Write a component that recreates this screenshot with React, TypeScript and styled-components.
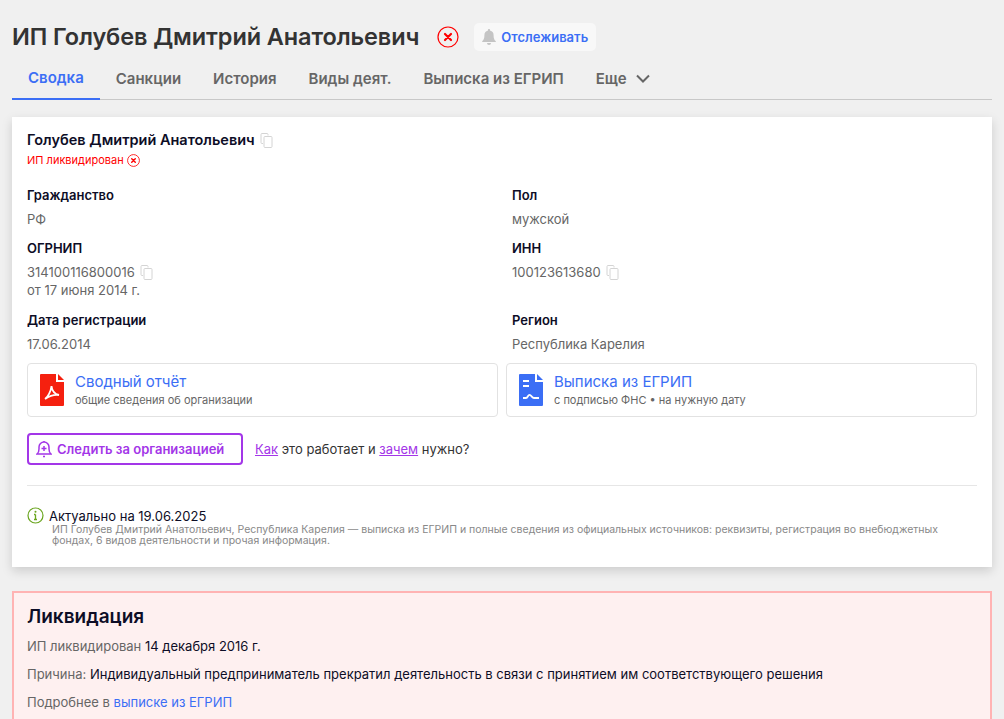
import React from "react";
import styled, { createGlobalStyle } from "styled-components";

const GlobalStyle = createGlobalStyle`
  html, body {
    margin: 0;
    height: 719px;
    overflow: hidden;
    background: #f0f0f0;
    font-family: Inter, "Noto Sans", sans-serif;
    color: #0d0d26;
  }
  * { box-sizing: border-box; }
`;

const Page = styled.div`
  padding: 0 12px;
`;

const Header = styled.div`
  display: flex;
  align-items: center;
  height: 57px;
  padding-top: 16px;
`;

const Title = styled.h1`
  margin: 0;
  font-size: 23.5px;
  font-weight: 600;
  color: #333;
  letter-spacing: -0.1px;
`;

const Track = styled.button`
  display: flex;
  align-items: center;
  gap: 5px;
  height: 28px;
  margin-left: 15px;
  padding: 0 8px;
  border: 0;
  border-radius: 5px;
  background: #f8f8f8;
  color: #3b6ef5;
  font: 600 13px Inter, sans-serif;
`;

const Tabs = styled.nav`
  display: flex;
  height: 43px;
  border-bottom: 1px solid #c8c8c8;
`;

const Tab = styled.div<{ $active?: boolean }>`
  display: flex;
  align-items: center;
  gap: 8px;
  height: 43px;
  padding: 0 16px;
  font-size: 15px;
  font-weight: 600;
  color: ${(p) => (p.$active ? "#3b6ef5" : "#666")};
  border-bottom: ${(p) => (p.$active ? "2px solid #3b6ef5" : "none")};
`;

const Card = styled.section`
  height: 450px;
  margin-top: 17px;
  padding: 14px 15px 0;
  background: #fff;
  box-shadow: 0 4px 10px rgba(0, 0, 0, 0.15);
`;

const Name = styled.div`
  display: flex;
  align-items: center;
  gap: 5px;
  font-size: 14.5px;
  font-weight: 600;
  line-height: 18px;
`;

const Status = styled.div`
  display: flex;
  align-items: center;
  gap: 3px;
  margin-top: 3px;
  font-size: 11px;
  line-height: 16px;
  color: #f00;
`;

const Facts = styled.div`
  display: grid;
  grid-template-columns: 485px 1fr;
  margin-top: 18px;
`;

const Fact = styled.div<{ $height: number }>`
  height: ${(p) => p.$height}px;
`;

const Label = styled.div`
  font-size: 13px;
  font-weight: 600;
  line-height: 18px;
`;

const Value = styled.div`
  display: flex;
  align-items: center;
  gap: 5px;
  margin-top: 6px;
  font-size: 13px;
  line-height: 18px;
  color: #666;
`;

const SubValue = styled.div`
  font-size: 13px;
  line-height: 18px;
  color: #666;
`;

const Docs = styled.div`
  display: grid;
  grid-template-columns: 1fr 1fr;
  gap: 8px;
  margin-top: 4px;
`;

const Doc = styled.a`
  display: flex;
  align-items: center;
  gap: 11px;
  height: 54px;
  padding: 0 12px;
  border: 1px solid #e2e2e2;
  border-radius: 4px;
`;

const DocTitle = styled.div`
  font-size: 15px;
  line-height: 20px;
  color: #3b6ef5;
`;

const DocText = styled.div`
  font-size: 11px;
  line-height: 16px;
  color: #666;
`;

const FollowRow = styled.div`
  display: flex;
  align-items: center;
  gap: 12px;
  margin-top: 16px;
  font-size: 13px;
  color: #333;
`;

const Follow = styled.button`
  display: flex;
  align-items: center;
  gap: 5px;
  width: 216px;
  height: 32px;
  padding: 0 7px;
  background: #fff;
  border: 2px solid #a336e8;
  border-radius: 4px;
  color: #a336e8;
  font: 600 13px Inter, sans-serif;
`;

const Link = styled.a<{ $color?: string }>`
  color: ${(p) => p.$color ?? "#a336e8"};
  text-decoration: ${(p) => (p.$color ? "none" : "underline")};
`;

const Divider = styled.hr`
  margin: 20px 0 0;
  border: 0;
  border-top: 1px solid #e6e6e6;
`;

const Actual = styled.div`
  display: flex;
  align-items: center;
  gap: 5px;
  margin-top: 21px;
  font-size: 13px;
  line-height: 16px;
`;

const Note = styled.p`
  margin: 0 0 0 25px;
  font-size: 10.5px;
  line-height: 11px;
  color: #888;
`;

const Alert = styled.section`
  height: 200px;
  margin-top: 24px;
  padding: 11px 13px;
  background: #fef0f0;
  border: 2px solid #ffb3b3;
`;

const AlertTitle = styled.h2`
  margin: 0 0 7px;
  font-size: 19px;
  font-weight: 600;
  line-height: 26px;
`;

const AlertLine = styled.p`
  margin: 0 0 10px;
  font-size: 13px;
  line-height: 18px;
  color: #666;
  b {
    font-weight: 400;
    color: #0d0d26;
  }
`;

const CopyIcon = () => (
  <svg width="13" height="15" viewBox="0 0 13 15" fill="none" stroke="#d4d4d4" strokeWidth="1">
    <path d="M8 2.5V1.5a1 1 0 0 0-1-1H2a1 1 0 0 0-1 1v8a1 1 0 0 0 1 1h1" />
    <rect x="4" y="3.5" width="8" height="11" rx="1" />
  </svg>
);

const CrossIcon = ({ size, width }: { size: number; width: number }) => (
  <svg width={size} height={size} viewBox="0 0 22 22" fill="none" stroke="#f00">
    <circle cx="11" cy="11" r="10" strokeWidth={width} />
    <path d="M8 8l6 6M14 8l-6 6" strokeWidth={width + 1} strokeLinecap="round" />
  </svg>
);

const BellIcon = () => (
  <svg width="14" height="16" viewBox="0 0 14 16" fill="#c4c4c4">
    <path d="M7 0a1.2 1.2 0 0 0-1.2 1.2v.6A4.5 4.5 0 0 0 2.4 6.2c0 3.8-1.2 5-2.2 6V13h13.6v-.8c-1-1-2.2-2.2-2.2-6a4.5 4.5 0 0 0-3.4-4.4v-.6A1.2 1.2 0 0 0 7 0zM5 14a2 2 0 0 0 4 0z" />
  </svg>
);

const Chevron = () => (
  <svg width="16" height="10" viewBox="0 0 16 10" fill="none" stroke="#666" strokeWidth="2">
    <path d="M2 1.5l6 6 6-6" />
  </svg>
);

const PdfIcon = () => (
  <svg width="24" height="32" viewBox="0 0 24 32">
    <path d="M1 0h15v8h8v23a1 1 0 0 1-1 1H1a1 1 0 0 1-1-1V1a1 1 0 0 1 1-1z" fill="#f5200f" />
    <path d="M18 0l6 6h-6z" fill="#f5200f" />
    <path d="M5 25c3-2 6-8 6.500-13 .5 5 3 8 7.500 9-4-.5-9 .5-14 4z" fill="none" stroke="#fff" strokeWidth="1.800" />
  </svg>
);

const ExtractIcon = () => (
  <svg width="24" height="32" viewBox="0 0 24 32">
    <path d="M1 0h15v8h8v23a1 1 0 0 1-1 1H1a1 1 0 0 1-1-1V1a1 1 0 0 1 1-1z" fill="#3b6ef5" />
    <path d="M18 0l6 6h-6z" fill="#3b6ef5" />
    <path d="M4 6h6v2H4zM4 11h6v2H4z" fill="#fff" />
    <path d="M4 24h3c2 0 2-4 4-3s2 3 4 3h5" fill="none" stroke="#fff" strokeWidth="1.800" />
  </svg>
);

const FollowIcon = () => (
  <svg width="16" height="18" viewBox="0 0 16 18" fill="none" stroke="#a336e8" strokeWidth="1.500">
    <path d="M1 14h14c-1.500-1-2-2.500-2-5V7a5 5 0 0 0-10 0v2c0 2.500-.5 4-2 5z" />
    <path d="M8 6v5M5.500 8.500h5M8 1v1M7 16.500h2" />
  </svg>
);

const InfoIcon = () => (
  <svg width="17" height="17" viewBox="0 0 17 17" fill="none">
    <circle cx="8.500" cy="8.500" r="7.500" stroke="#6aa51f" strokeWidth="1.200" />
    <path d="M8.500 7.500v5M7 12.500h3M7 7.500h1.500" stroke="#6aa51f" strokeWidth="1.300" />
    <circle cx="8.500" cy="4.800" r="1" fill="#6aa51f" />
  </svg>
);

export default function App() {
  return (
    <Page>
      <GlobalStyle />
      <Header>
        <Title>ИП Голубев Дмитрий Анатольевич</Title>
        <span style={{ width: 18 }} />
        <CrossIcon size={22} width={1.2} />
        <Track>
          <BellIcon />
          Отслеживать
        </Track>
      </Header>
      <Tabs>
        <Tab $active>Сводка</Tab>
        <Tab>Санкции</Tab>
        <Tab>История</Tab>
        <Tab>Виды деят.</Tab>
        <Tab>Выписка из ЕГРИП</Tab>
        <Tab>
          Еще <Chevron />
        </Tab>
      </Tabs>
      <Card>
        <Name>
          Голубев Дмитрий Анатольевич <CopyIcon />
        </Name>
        <Status>
          ИП ликвидирован <CrossIcon size={13} width={1.4} />
        </Status>
        <Facts>
          <Fact $height={53}>
            <Label>Гражданство</Label>
            <Value>РФ</Value>
          </Fact>
          <Fact $height={53}>
            <Label>Пол</Label>
            <Value>мужской</Value>
          </Fact>
          <Fact $height={72}>
            <Label>ОГРНИП</Label>
            <Value>
              314100116800016 <CopyIcon />
            </Value>
            <SubValue>от 17 июня 2014 г.</SubValue>
          </Fact>
          <Fact $height={72}>
            <Label>ИНН</Label>
            <Value>
              100123613680 <CopyIcon />
            </Value>
          </Fact>
          <Fact $height={48}>
            <Label>Дата регистрации</Label>
            <Value>17.06.2014</Value>
          </Fact>
          <Fact $height={48}>
            <Label>Регион</Label>
            <Value>Республика Карелия</Value>
          </Fact>
        </Facts>
        <Docs>
          <Doc>
            <PdfIcon />
            <div>
              <DocTitle>Сводный отчёт</DocTitle>
              <DocText>общие сведения об организации</DocText>
            </div>
          </Doc>
          <Doc>
            <ExtractIcon />
            <div>
              <DocTitle>Выписка из ЕГРИП</DocTitle>
              <DocText>с подписью ФНС • на нужную дату</DocText>
            </div>
          </Doc>
        </Docs>
        <FollowRow>
          <Follow>
            <FollowIcon />
            Следить за организацией
          </Follow>
          <span>
            <Link>Как</Link> это работает и <Link>зачем</Link> нужно?
          </span>
        </FollowRow>
        <Divider />
        <Actual>
          <InfoIcon />
          Актуально на 19.06.2025
        </Actual>
        <Note>
          ИП Голубев Дмитрий Анатольевич, Республика Карелия — выписка из ЕГРИП и полные сведения из официальных источников: реквизиты, регистрация во внебюджетных фондах, 6 видов деятельности и прочая информация.
        </Note>
      </Card>
      <Alert>
        <AlertTitle>Ликвидация</AlertTitle>
        <AlertLine>
          ИП ликвидирован <b>14 декабря 2016 г.</b>
        </AlertLine>
        <AlertLine>
          Причина: <b>Индивидуальный предприниматель прекратил деятельность в связи с принятием им соответствующего решения</b>
        </AlertLine>
        <AlertLine>
          Подробнее в <Link $color="#3b6ef5">выписке из ЕГРИП</Link>
        </AlertLine>
      </Alert>
    </Page>
  );
}
